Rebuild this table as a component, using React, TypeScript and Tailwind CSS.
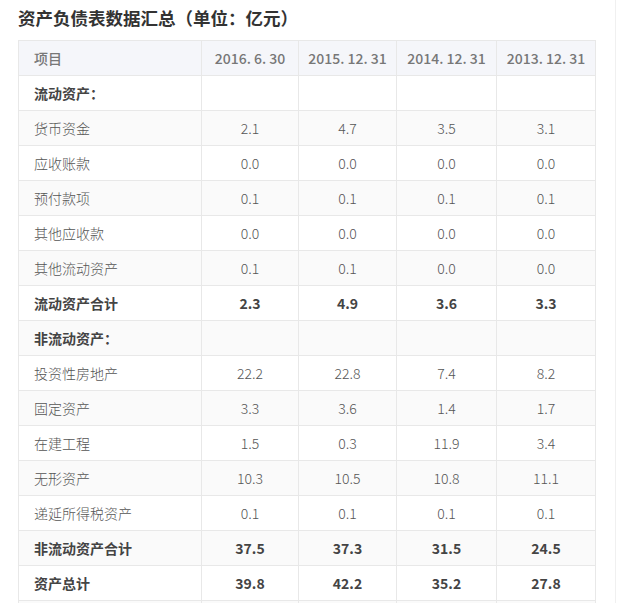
import React from "react";

type Row = { label: string; values: string[]; kind?: "section" | "total" };

const headers = ["2016. 6. 30", "2015. 12. 31", "2014. 12. 31", "2013. 12. 31"];

const rows: Row[] = [
  { label: "流动资产：", values: ["", "", "", ""], kind: "section" },
  { label: "货币资金", values: ["2.1", "4.7", "3.5", "3.1"] },
  { label: "应收账款", values: ["0.0", "0.0", "0.0", "0.0"] },
  { label: "预付款项", values: ["0.1", "0.1", "0.1", "0.1"] },
  { label: "其他应收款", values: ["0.0", "0.0", "0.0", "0.0"] },
  { label: "其他流动资产", values: ["0.1", "0.1", "0.0", "0.0"] },
  { label: "流动资产合计", values: ["2.3", "4.9", "3.6", "3.3"], kind: "total" },
  { label: "非流动资产：", values: ["", "", "", ""], kind: "section" },
  { label: "投资性房地产", values: ["22.2", "22.8", "7.4", "8.2"] },
  { label: "固定资产", values: ["3.3", "3.6", "1.4", "1.7"] },
  { label: "在建工程", values: ["1.5", "0.3", "11.9", "3.4"] },
  { label: "无形资产", values: ["10.3", "10.5", "10.8", "11.1"] },
  { label: "递延所得税资产", values: ["0.1", "0.1", "0.1", "0.1"] },
  { label: "非流动资产合计", values: ["37.5", "37.3", "31.5", "24.5"], kind: "total" },
  { label: "资产总计", values: ["39.8", "42.2", "35.2", "27.8"], kind: "total" },
  // next row is only peeking in at the bottom edge
  { label: "", values: ["", "", "", ""] },
];

const colWidths = ["w-[183px]", "w-[97px]", "w-[98px]", "w-[100px]", "w-[99px]"];

export default function App() {
  return (
    <div
      className="h-[603px] w-[617px] overflow-hidden bg-white"
      style={{ fontFamily: '"Noto Sans CJK SC", "Noto Sans", sans-serif' }}
    >
      <div className="flex h-full">
        <div className="w-[615px] pl-[18px]">
          <h2 className="pt-[6px] text-[17.5px] font-bold leading-[24px] text-[#333]">
            资产负债表数据汇总（单位：亿元）
          </h2>
          <table className="mt-[10px] w-[578px] table-fixed border-collapse text-[14px]">
            <colgroup>
              {colWidths.map((w, i) => (
                <col key={i} className={w} />
              ))}
            </colgroup>
            <thead>
              <tr className="bg-[#f5f6fa]">
                <th className="h-[35px] border border-[#e8e8e8] pl-[15px] text-left font-medium text-[#777]">
                  项目
                </th>
                {headers.map((h) => (
                  <th
                    key={h}
                    className="h-[35px] border border-[#e8e8e8] text-center font-medium text-[#777]"
                  >
                    {h}
                  </th>
                ))}
              </tr>
            </thead>
            <tbody>
              {rows.map((r, i) => {
                const bold = r.kind === "section" || r.kind === "total";
                return (
                  <tr key={i} className={i % 2 === 1 ? "bg-[#fafafa]" : "bg-white"}>
                    <td
                      className={`h-[35px] border border-[#e8e8e8] pl-[15px] text-left ${
                        bold ? "font-bold text-[#444]" : "font-light text-[#555]"
                      }`}
                    >
                      {r.label}
                    </td>
                    {r.values.map((v, j) => (
                      <td
                        key={j}
                        className={`h-[35px] border border-[#e8e8e8] text-center ${
                          bold ? "font-bold text-[#444]" : "font-light text-[#555]"
                        }`}
                      >
                        {v}
                      </td>
                    ))}
                  </tr>
                );
              })}
            </tbody>
          </table>
        </div>
        <div className="h-full w-[2px] border-l border-[#f0f0f0]" />
      </div>
    </div>
  );
}
